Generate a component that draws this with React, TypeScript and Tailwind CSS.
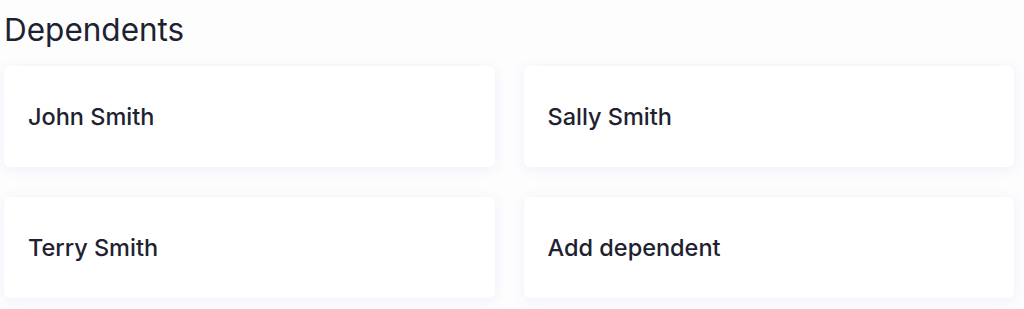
const dependents = ["John Smith", "Sally Smith", "Terry Smith", "Add dependent"];

export default function App() {
  return (
    <div
      className="min-h-[309px] bg-[#fdfdfe] pl-1 pr-2.5 pt-3 text-[#1e2230]"
      style={{ fontFamily: "Inter, 'Noto Sans', sans-serif" }}
    >
      <h1 className="text-[31.5px] leading-9 font-normal">Dependents</h1>
      <div className="mt-[18px] grid grid-cols-2 gap-x-[29px] gap-y-[30px]">
        {dependents.map((name) => (
          <div
            key={name}
            className="flex h-[101px] items-center rounded-md bg-white px-6 shadow-[0_2px_14px_rgba(90,105,190,0.09)]"
          >
            <span className="text-[23.5px] leading-7 font-medium">{name}</span>
          </div>
        ))}
      </div>
    </div>
  );
}
